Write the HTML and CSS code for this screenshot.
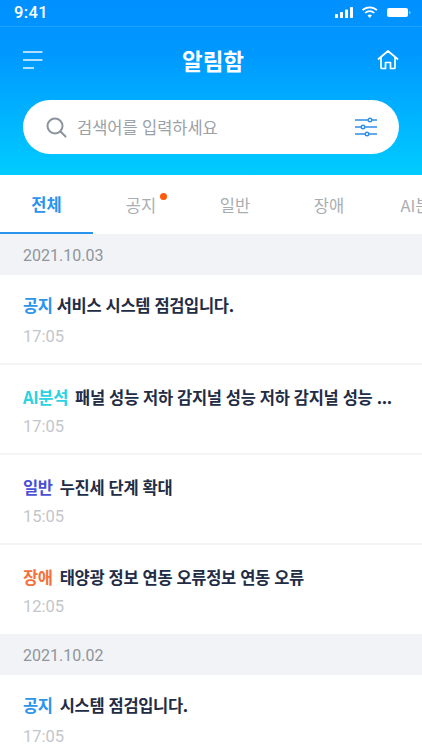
FILE: index.html
```html
<!DOCTYPE html>
<html lang="ko">
<head>
<meta charset="utf-8">
<title>알림함</title>
<link rel="stylesheet" href="styles.css">
</head>
<body>
<div class="app">
  <header class="hero">
    <div class="status">
      <span class="clock">9:41</span>
      <svg class="status-icons" width="78" height="14" viewBox="0 0 78 14">
        <g fill="#fff">
          <rect x="1" y="8" width="3" height="4" rx=".8"/><rect x="6" y="6" width="3" height="6" rx=".8"/>
          <rect x="11" y="3.5" width="3" height="8.5" rx=".8"/><rect x="16" y="1" width="3" height="11" rx=".8"/>
          <path d="M33.500 9.500l2.200 2.600 2.200-2.600a3.200 3.200 0 0 0-4.400 0z"/>
          <rect x="53" y="2" width="21" height="9" rx="2"/><rect x="75" y="5" width="1.500" height="3" rx=".7" opacity=".5"/>
        </g>
        <g fill="none" stroke="#fff" stroke-width="1.700">
          <path d="M31.100 7a6.600 6.600 0 0 1 9.200 0"/><path d="M28.500 4.200a10.400 10.400 0 0 1 14.400 0"/>
        </g>
      </svg>
    </div>
    <div class="nav">
      <svg class="nav-icon" width="20" height="20" viewBox="0 0 20 20" fill="none" stroke="#fff" stroke-width="1.600" opacity=".92">
        <path d="M0 2h19.500M0 10h19.500M0 18h11"/>
      </svg>
      <h1 class="title">알림함</h1>
      <svg class="nav-icon" width="22" height="22" viewBox="0 0 22 22" fill="none" stroke="#fff" stroke-width="1.700" stroke-linejoin="round" stroke-linecap="round">
        <path d="M1.500 10L11 2l9.500 8M4 8v10.500a1 1 0 0 0 1 1h3.500v-6h5v6H17a1 1 0 0 0 1-1V8"/>
      </svg>
    </div>
    <div class="search">
      <svg width="22" height="22" viewBox="0 0 22 22" fill="none" stroke="#8b949c" stroke-width="2" stroke-linecap="round">
        <circle cx="10" cy="10" r="7.500"/><path d="M15.500 15.500L20.500 20.500"/>
      </svg>
      <span class="search-text">검색어를 입력하세요</span>
      <svg class="filter" width="22" height="20" viewBox="0 0 22 20" fill="#fff" stroke="#2f8fe8" stroke-width="1.400">
        <path d="M0 3h22M0 10h22M0 17h22"/>
        <circle cx="15" cy="3" r="1.800"/><circle cx="8" cy="10" r="1.800"/><circle cx="12" cy="17" r="1.800"/>
      </svg>
    </div>
  </header>

  <nav class="tabs">
    <span class="tab tab-on">전체</span>
    <span class="tab"><span class="tab-label">공지<i class="dot"></i></span></span>
    <span class="tab">일반</span>
    <span class="tab">장애</span>
    <span class="tab">AI분석</span>
  </nav>

  <div class="date">2021.10.03</div>
  <article class="item item-first">
    <p class="line"><span class="tag tag-tight notice">공지</span>서비스 시스템 점검입니다.</p>
    <time class="time">17:05</time>
  </article>
  <article class="item">
    <p class="line"><span class="tag ai">AI분석</span>패널 성능 저하 감지널 성능 저하 감지널 성능 ...</p>
    <time class="time">17:05</time>
  </article>
  <article class="item">
    <p class="line"><span class="tag normal">일반</span>누진세 단계 확대</p>
    <time class="time">15:05</time>
  </article>
  <article class="item item-last">
    <p class="line"><span class="tag fault">장애</span>태양광 정보 연동 오류정보 연동 오류</p>
    <time class="time">12:05</time>
  </article>
  <div class="date">2021.10.02</div>
  <article class="item item-first">
    <p class="line"><span class="tag notice">공지</span>시스템 점검입니다.</p>
    <time class="time">17:05</time>
  </article>
</div>
</body>
</html>
```

FILE: styles.css
```css
* { box-sizing: border-box; margin: 0; padding: 0; }
html, body { height: 100%; overflow: hidden; background: #fff; }
body { font-family: "Noto Sans CJK KR", "Noto Sans", sans-serif; }
.app { width: 422px; height: 750px; overflow: hidden; }

.hero {
  height: 175px;
  background: linear-gradient(180deg, #0090ff 0%, #0098ff 30%, #00ccff 100%);
  color: #fff;
}
.status {
  height: 27px;
  padding: 0 0 0 14px;
  display: flex;
  align-items: center;
  justify-content: space-between;
  border-bottom: 1px solid rgba(255, 255, 255, .12);
}
.clock { font: 500 16.500px/1 Roboto, sans-serif; letter-spacing: .4px; }
.status-icons { margin-right: 10px; }
.nav {
  height: 66px;
  padding: 0 23px;
  display: flex;
  align-items: center;
  justify-content: space-between;
}
.title { font-size: 22.500px; font-weight: 700; line-height: 1; margin-left: 6px; }
.search {
  margin: 7px 23px 0;
  height: 54px;
  padding: 0 22px;
  border-radius: 27px;
  background: #fff;
  display: flex;
  align-items: center;
  gap: 10px;
}
.search-text { flex: 1; font-size: 16.500px; color: #9aa1a8; letter-spacing: -.05px; }

.tabs { height: 59px; display: flex; overflow: hidden; }
.tab {
  flex: 0 0 94px;
  display: flex;
  align-items: center;
  justify-content: center;
  font-size: 16.500px;
  color: #a9adb2;
  white-space: nowrap;
}
.tab-on { flex-basis: 93px; margin-right: 1px; color: #2a93ee; font-weight: 700; border-bottom: 2px solid #2a93ee; }
.tab-label { position: relative; }
.dot {
  position: absolute;
  top: 0;
  right: -11px;
  width: 7px;
  height: 7px;
  border-radius: 50%;
  background: #ff5a0a;
}

.date {
  height: 41px;
  padding: 3px 23px 0;
  display: flex;
  align-items: center;
  background: #f1f3f6;
  font: 400 16px/1 Roboto, sans-serif;
  color: #8f959b;
}
.item {
  height: 90px;
  padding: 18px 23px 0;
  border-bottom: 2px solid #f3f4f6;
}
.item-first { padding-top: 16px; }
.item-first .time { margin-top: 6px; }
.item-last { height: 89px; border-bottom: 0; }
.line {
  font-size: 16.500px;
  line-height: 28px;
  font-weight: 700;
  color: #222c44;
  letter-spacing: -.33px;
  white-space: nowrap;
}
.tag { margin-right: 7px; }
.tag-tight { margin-right: 4px; }
.notice { color: #2b95ea; }
.ai { color: #2ad2e2; }
.normal { color: #4a4fd8; }
.fault { color: #f5713a; }
.time {
  display: block;
  margin-top: 4px;
  font: 400 16.500px/24px Roboto, sans-serif;
  color: #c3c6ca;
}
```
